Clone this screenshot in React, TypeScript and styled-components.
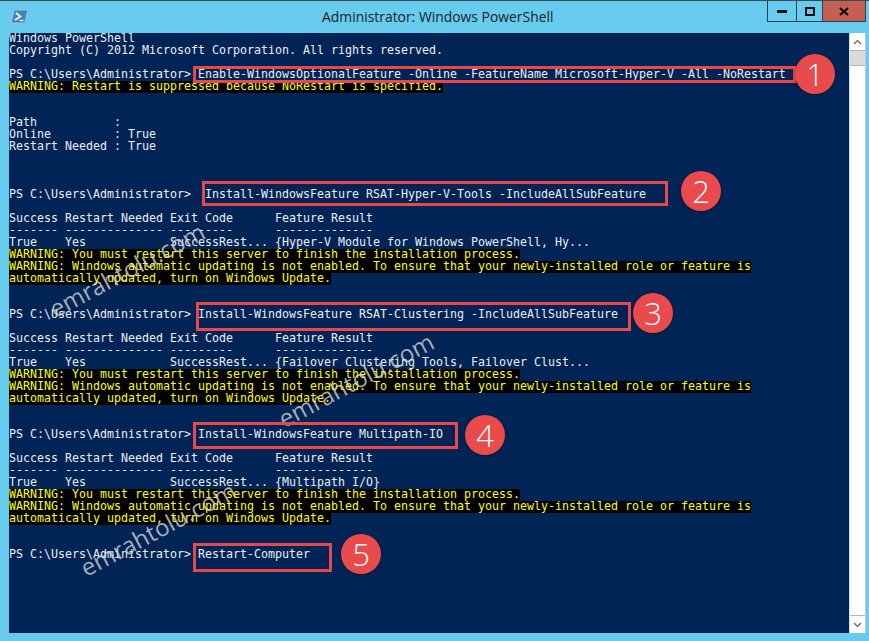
import styled, { createGlobalStyle } from "styled-components";

const GlobalStyle = createGlobalStyle`
    html, body {
        margin: 0;
        padding: 0;
        background: #66cbed;
    }
`;

const Window = styled.div`
    position: relative;
    width: 869px;
    height: 641px;
    overflow: hidden;
    background: #66cbed;
    border-top: 1px solid #3a4a52;
    box-sizing: border-box;
    display: flex;
    flex-direction: column;
`;
const TitleBar = styled.div`
    height: 32px;
    flex: none;
    display: flex;
    position: relative;
    align-items: flex-start;
    justify-content: space-between;
    padding-left: 11px;
`;
const ShellIcon = styled.svg`
    width: 17px;
    height: 15px;
    margin-top: 8px;
`;
const Title = styled.div`
    position: absolute;
    left: 322px;
    top: 6px;
    font-family: "Open Sans", sans-serif;
    font-size: 13.9px;
    line-height: 19px;
    color: #1c2226;
    white-space: nowrap;
`;
const Controls = styled.div`
    display: flex;
    margin-right: 3px;
    height: 21px;
    box-sizing: border-box;
    border: 1px solid #2b3f4b;
    border-top: none;
`;
const ControlButton = styled.div<{ $width: number; $close?: boolean }>`
    width: ${props => props.$width}px;
    box-sizing: border-box;
    display: flex;
    align-items: center;
    justify-content: center;
    background: ${props => props.$close ? "#c45f54" : "transparent"};
    & + & {
        border-left: 1px solid #2b3f4b;
    }
`;
const Body = styled.div`
    flex: 1;
    display: flex;
    padding: 0 3px 8px 9px;
    min-height: 0;
`;
const Console = styled.div`
    flex: 1;
    background: #012456;
    font-family: "DejaVu Sans Mono", monospace;
    font-size: 11.63px;
    color: #eeedf0;
`;
const Line = styled.div`
    height: 12px;
    line-height: 10px;
    white-space: pre;
`;
const Warning = styled.div`
    width: fit-content;
    height: 12px;
    background: #000;
    color: #ffff00;
`;
const ScrollBar = styled.div`
    width: 17px;
    flex: none;
    background: #fff;
    display: flex;
    flex-direction: column;
    box-sizing: border-box;
    border-right: 1px solid #c8c8c8;
    border-left: 1px solid #dcdcdc;
`;
const ScrollButton = styled.div`
    height: 17px;
    flex: none;
    display: flex;
    align-items: center;
    justify-content: center;
    background: #fff;
`;
const ScrollThumb = styled.div`
    height: 16px;
    flex: none;
    background: #dadada;
    border-top: 1px solid #b5b5b5;
    border-bottom: 1px solid #b5b5b5;
    box-sizing: border-box;
`;
const ScrollTrack = styled.div`
    flex: 1;
    border-bottom: 1px solid #b5b5b5;
`;
const Highlight = styled.div<{ $x: number; $y: number; $w: number; $h: number }>`
    position: absolute;
    left: ${props => props.$x}px;
    top: ${props => props.$y}px;
    width: ${props => props.$w}px;
    height: ${props => props.$h}px;
    box-sizing: border-box;
    border: 3px solid #e8484a;
`;
const Badge = styled.div<{ $x: number; $y: number }>`
    position: absolute;
    left: ${props => props.$x - 20}px;
    top: ${props => props.$y - 20}px;
    width: 40px;
    height: 40px;
    border-radius: 50%;
    background: #e94a4b;
    box-shadow: 0 1px 3px rgba(0, 0, 0, 0.35);
    color: #fff;
    font-family: "Open Sans", sans-serif;
    font-weight: 300;
    font-size: 31px;
    line-height: 40px;
    text-align: center;
`;
const Watermark = styled.div<{ $x: number; $y: number }>`
    position: absolute;
    left: ${props => props.$x}px;
    top: ${props => props.$y}px;
    width: 180px;
    margin-left: -90px;
    margin-top: -15px;
    line-height: 30px;
    text-align: center;
    font-family: "Open Sans", sans-serif;
    font-size: 24px;
    color: rgba(215, 215, 215, 0.78);
    transform: rotate(-28deg);
    white-space: nowrap;
`;

const PROMPT = "PS C:\\Users\\Administrator>";
const HEADER = "Success Restart Needed Exit Code      Feature Result";
const RULER = "------- -------------- ---------      --------------";
const W_RESTART = "WARNING: You must restart this server to finish the installation process.";
const W_UPDATE = "WARNING: Windows automatic updating is not enabled. To ensure that your newly-installed role or feature is";
const W_UPDATE_2 = "automatically updated, turn on Windows Update.";

type Row = { text?: string; warn?: boolean };
const t = (text: string): Row => ({ text });
const w = (text: string): Row => ({ text, warn: true });
const blank = (n: number): Row[] => Array.from({ length: n }, () => ({}));
const result = (row: string): Row[] => [
    t(HEADER), t(RULER), t(row), w(W_RESTART), w(W_UPDATE), w(W_UPDATE_2),
];

const rows: Row[] = [
    t("Windows PowerShell"),
    t("Copyright (C) 2012 Microsoft Corporation. All rights reserved."),
    ...blank(1),
    t(`${PROMPT} Enable-WindowsOptionalFeature -Online -FeatureName Microsoft-Hyper-V -All -NoRestart`),
    w("WARNING: Restart is suppressed because NoRestart is specified."),
    ...blank(2),
    t("Path           :"),
    t("Online         : True"),
    t("Restart Needed : True"),
    ...blank(3),
    t(`${PROMPT}  Install-WindowsFeature RSAT-Hyper-V-Tools -IncludeAllSubFeature`),
    ...blank(1),
    ...result("True    Yes            SuccessRest... {Hyper-V Module for Windows PowerShell, Hy..."),
    ...blank(2),
    t(`${PROMPT} Install-WindowsFeature RSAT-Clustering -IncludeAllSubFeature`),
    ...blank(1),
    ...result("True    Yes            SuccessRest... {Failover Clustering Tools, Failover Clust..."),
    ...blank(2),
    t(`${PROMPT} Install-WindowsFeature Multipath-IO`),
    ...blank(1),
    ...result("True    Yes            SuccessRest... {Multipath I/O}"),
    ...blank(2),
    t(`${PROMPT} Restart-Computer`),
];

const boxes = [
    { x: 193, y: 65, w: 603, h: 17 },
    { x: 202, y: 180, w: 466, h: 25 },
    { x: 196, y: 301, w: 435, h: 29 },
    { x: 193, y: 421, w: 265, h: 27 },
    { x: 193, y: 542, w: 139, h: 29 },
];
const badges = [
    { x: 815, y: 73, n: 1 },
    { x: 701, y: 190, n: 2 },
    { x: 653, y: 312, n: 3 },
    { x: 485, y: 434, n: 4 },
    { x: 361, y: 553, n: 5 },
];
const marks = [
    { x: 127, y: 269 },
    { x: 356, y: 379 },
    { x: 158, y: 528 },
];

const App = () => {
    return (
        <>
            <GlobalStyle />
            <Window>
                <TitleBar>
                    <ShellIcon viewBox="0 0 17 15">
                        <path d="M4 1 H16 Q17 1 16.7 2 L14 13 Q13.7 14 12.7 14 H1 Q0 14 0.3 13 L3 2 Q3.2 1 4 1 Z" fill="#3f86bd" stroke="#9fc3dc" strokeWidth="1" />
                        <path d="M5 4 L9.5 7.5 L4 11" fill="none" stroke="#fff" strokeWidth="1.6" />
                        <path d="M8.5 11.5 H12.5" stroke="#dfeaf3" strokeWidth="1.4" />
                    </ShellIcon>
                    <Title>Administrator: Windows PowerShell</Title>
                    <Controls>
                        <ControlButton $width={28}>
                            <svg width="10" height="4" viewBox="0 0 10 4"><rect width="10" height="3" y="1" fill="#0a0a0a" /></svg>
                        </ControlButton>
                        <ControlButton $width={26}>
                            <svg width="10" height="9" viewBox="0 0 10 9"><rect x="1" y="1" width="8" height="7" fill="none" stroke="#0a0a0a" strokeWidth="2" /></svg>
                        </ControlButton>
                        <ControlButton $width={43} $close>
                            <svg width="10" height="9" viewBox="0 0 10 9"><path d="M1 1 L9 8 M9 1 L1 8" stroke="#0a0a0a" strokeWidth="2.2" /></svg>
                        </ControlButton>
                    </Controls>
                </TitleBar>
                <Body>
                    <Console>
                        {rows.map((row, index) => (
                            <Line key={index}>
                                {row.warn ? <Warning>{row.text}</Warning> : row.text}
                            </Line>
                        ))}
                    </Console>
                    <ScrollBar>
                        <ScrollButton>
                            <svg width="9" height="6" viewBox="0 0 9 6"><path d="M1 5 L4.5 1.5 L8 5" fill="none" stroke="#606060" strokeWidth="1.2" /></svg>
                        </ScrollButton>
                        <ScrollThumb />
                        <ScrollTrack />
                        <ScrollButton>
                            <svg width="9" height="6" viewBox="0 0 9 6"><path d="M1 1 L4.5 4.5 L8 1" fill="none" stroke="#606060" strokeWidth="1.2" /></svg>
                        </ScrollButton>
                    </ScrollBar>
                </Body>
                {marks.map((mark, index) => (
                    <Watermark key={index} $x={mark.x} $y={mark.y}>emrahtolu.com</Watermark>
                ))}
                {boxes.map((box, index) => (
                    <Highlight key={index} $x={box.x} $y={box.y} $w={box.w} $h={box.h} />
                ))}
                {badges.map(badge => (
                    <Badge key={badge.n} $x={badge.x} $y={badge.y}>{badge.n}</Badge>
                ))}
            </Window>
        </>
    );
};

export default App;
